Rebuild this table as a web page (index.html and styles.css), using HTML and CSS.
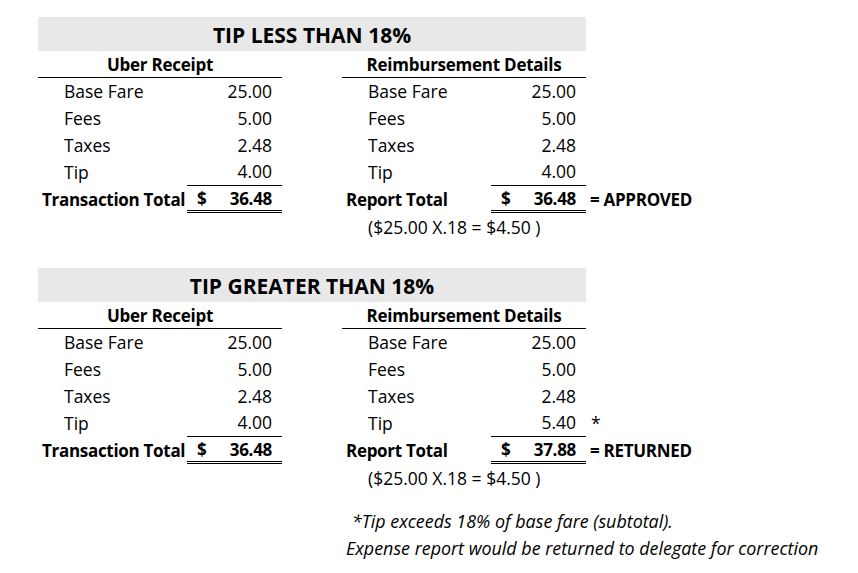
FILE: index.html
```html
<!DOCTYPE html>
<html lang="en">
<head>
<meta charset="utf-8">
<title>Tip reimbursement examples</title>
<link rel="stylesheet" href="styles.css">
</head>
<body>
<main class="sheet">
  <section class="case">
    <h2 class="band">TIP LESS THAN 18%</h2>
    <div class="grid">
      <div class="head c1">Uber Receipt</div>
      <div class="head c2">Reimbursement Details</div>

      <div class="lbl c1">Base Fare</div><div class="amt c1">25.00</div>
      <div class="lbl c2">Base Fare</div><div class="amt c2">25.00</div><div class="note"></div>

      <div class="lbl c1">Fees</div><div class="amt c1">5.00</div>
      <div class="lbl c2">Fees</div><div class="amt c2">5.00</div><div class="note"></div>

      <div class="lbl c1">Taxes</div><div class="amt c1">2.48</div>
      <div class="lbl c2">Taxes</div><div class="amt c2">2.48</div><div class="note"></div>

      <div class="lbl c1">Tip</div><div class="amt c1 sub">4.00</div>
      <div class="lbl c2">Tip</div><div class="amt c2 sub">4.00</div><div class="note"></div>

      <div class="tlbl c1">Transaction Total</div><div class="tamt c1"><span>$</span><span>36.48</span></div>
      <div class="tlbl c2">Report Total</div><div class="tamt c2"><span>$</span><span>36.48</span></div><div class="status">= APPROVED</div>

      <div class="formula">($25.00 X.18 = $4.50 )</div>
    </div>
  </section>

  <section class="case">
    <h2 class="band">TIP GREATER THAN 18%</h2>
    <div class="grid">
      <div class="head c1">Uber Receipt</div>
      <div class="head c2">Reimbursement Details</div>

      <div class="lbl c1">Base Fare</div><div class="amt c1">25.00</div>
      <div class="lbl c2">Base Fare</div><div class="amt c2">25.00</div><div class="note"></div>

      <div class="lbl c1">Fees</div><div class="amt c1">5.00</div>
      <div class="lbl c2">Fees</div><div class="amt c2">5.00</div><div class="note"></div>

      <div class="lbl c1">Taxes</div><div class="amt c1">2.48</div>
      <div class="lbl c2">Taxes</div><div class="amt c2">2.48</div><div class="note"></div>

      <div class="lbl c1">Tip</div><div class="amt c1 sub">4.00</div>
      <div class="lbl c2">Tip</div><div class="amt c2 sub">5.40</div><div class="note">*</div>

      <div class="tlbl c1">Transaction Total</div><div class="tamt c1"><span>$</span><span>36.48</span></div>
      <div class="tlbl c2">Report Total</div><div class="tamt c2"><span>$</span><span>37.88</span></div><div class="status">= RETURNED</div>

      <div class="formula">($25.00 X.18 = $4.50 )</div>
    </div>
    <div class="footnote">
      <p class="fn1">*Tip exceeds 18% of base fare (subtotal).</p>
      <p class="fn2">Expense report would be returned to delegate for correction</p>
    </div>
  </section>
</main>
</body>
</html>
```
FILE: styles.css
```css
* { box-sizing: border-box; }
html, body { margin: 0; padding: 0; background: #fff; }
body {
  font-family: "Open Sans", "Noto Sans", sans-serif;
  font-size: 17.5px;
  color: #000;
}
.sheet { padding: 17px 0 0 38px; }
.case { width: 800px; }
.case + .case { margin-top: 28px; }
.band {
  margin: 0;
  width: 548px;
  height: 34px;
  background: #e8e8e8;
  text-align: center;
  font-size: 21px;
  font-weight: 700;
  line-height: 36px;
}
.grid {
  display: grid;
  grid-template-columns: 149px 95px 60px 149px 95px 160px;
  grid-auto-rows: 27px;
  align-items: center;
}
.grid > div { height: 100%; display: flex; align-items: center; white-space: nowrap; }
.head {
  font-size: 17px;
  font-weight: 700;
  letter-spacing: -0.25px;
  justify-content: center;
  border-bottom: 1px solid #000;
  height: 27px;
}
.head.c1 { grid-column: 1 / 3; }
.head.c2 { grid-column: 4 / 6; }
.lbl { padding-left: 26px; }
.lbl, .amt, .note { padding-bottom: 2px; }
.lbl.c1 { grid-column: 1; }
.amt.c1, .tamt.c1 { grid-column: 2; }
.lbl.c2, .tlbl.c2 { grid-column: 4; }
.amt.c2, .tamt.c2 { grid-column: 5; }
.tlbl.c1 { grid-column: 1; }
.amt { justify-content: flex-end; padding-right: 10px; }
.sub { border-bottom: 1px solid #000; }
.tlbl, .tamt, .status { font-size: 17px; font-weight: 700; letter-spacing: -0.3px; }
.tlbl { padding-left: 4px; }
.tamt {
  justify-content: space-between;
  padding: 0 10px;
  border-bottom: 3px double #000;
}
.note, .status { grid-column: 6; padding-left: 5px; }
.status { padding-left: 4px; }
.formula { grid-column: 4 / 7; padding-left: 26px; }
.footnote { margin-top: 17px; padding-left: 304px; font-style: italic; font-size: 17.9px; }
.footnote p { margin: 0; height: 27px; line-height: 27px; white-space: nowrap; }
.fn1 { padding-left: 10px; }
.fn2 { padding-left: 4px; }
```
